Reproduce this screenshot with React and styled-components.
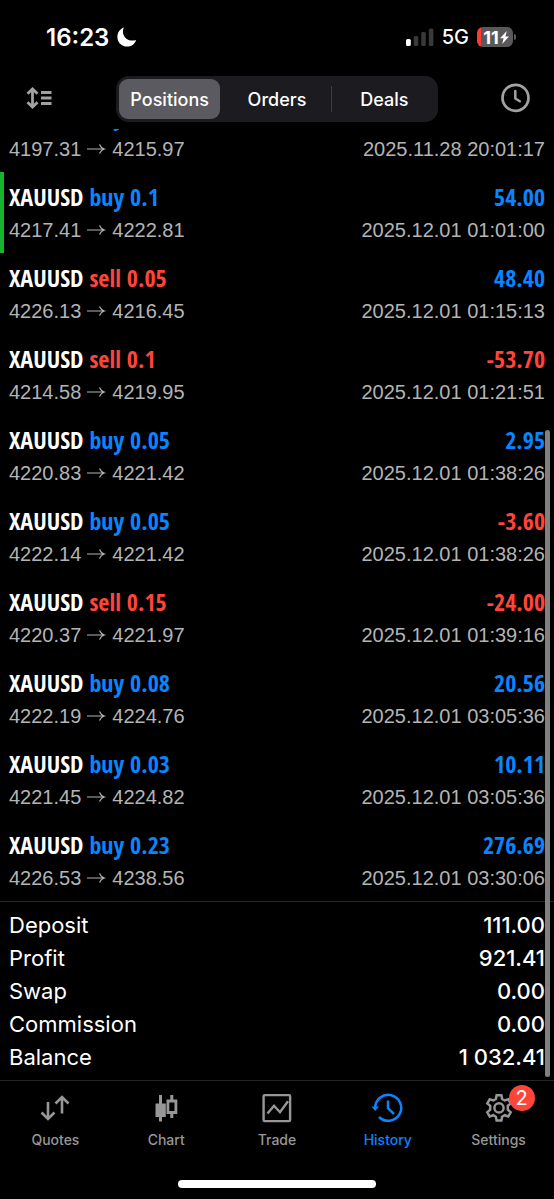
import styled, { createGlobalStyle } from "styled-components";

const positions = [
  { side: "buy", volume: "0.05", open: "4197.31", close: "4215.97", profit: "93.30", time: "2025.11.28 20:01:17" },
  { side: "buy", volume: "0.1", open: "4217.41", close: "4222.81", profit: "54.00", time: "2025.12.01 01:01:00", marked: true },
  { side: "sell", volume: "0.05", open: "4226.13", close: "4216.45", profit: "48.40", time: "2025.12.01 01:15:13" },
  { side: "sell", volume: "0.1", open: "4214.58", close: "4219.95", profit: "-53.70", time: "2025.12.01 01:21:51" },
  { side: "buy", volume: "0.05", open: "4220.83", close: "4221.42", profit: "2.95", time: "2025.12.01 01:38:26" },
  { side: "buy", volume: "0.05", open: "4222.14", close: "4221.42", profit: "-3.60", time: "2025.12.01 01:38:26" },
  { side: "sell", volume: "0.15", open: "4220.37", close: "4221.97", profit: "-24.00", time: "2025.12.01 01:39:16" },
  { side: "buy", volume: "0.08", open: "4222.19", close: "4224.76", profit: "20.56", time: "2025.12.01 03:05:36" },
  { side: "buy", volume: "0.03", open: "4221.45", close: "4224.82", profit: "10.11", time: "2025.12.01 03:05:36" },
  { side: "buy", volume: "0.23", open: "4226.53", close: "4238.56", profit: "276.69", time: "2025.12.01 03:30:06" },
];

const totals = [
  ["Deposit", "111.00"],
  ["Profit", "921.41"],
  ["Swap", "0.00"],
  ["Commission", "0.00"],
  ["Balance", "1 032.41"],
];

const views = ["Positions", "Orders", "Deals"];

const MoonIcon = () => (
  <svg width="20" height="20" viewBox="0 0 20 20" fill="#fff" aria-hidden="true">
    <path d="M6.800 0.600C5 5 6.200 9.500 9.800 12c2.700 1.800 6.200 2.100 9.400 0.900C17.800 17 14.200 19.600 10 19.600 4.600 19.600 0.400 15.400 0.400 10 0.400 5.600 3 1.900 6.800 0.600z" />
  </svg>
);

const SignalIcon = () => (
  <svg width="28" height="20" viewBox="0 0 28 20" aria-hidden="true">
    <rect x="0" y="12" width="4.800" height="7" rx="1.500" fill="#fff" />
    <rect x="7.700" y="9" width="4.600" height="10" rx="1.500" fill="#39393a" />
    <rect x="15.200" y="5" width="4.600" height="14" rx="1.500" fill="#39393a" />
    <rect x="22.800" y="1.500" width="4.600" height="17.500" rx="1.500" fill="#39393a" />
  </svg>
);

const BoltIcon = () => (
  <svg width="9" height="13" viewBox="0 0 9 13" fill="#fff" aria-hidden="true">
    <path d="M6.800 0L0 7.300h3.600L2.200 13 9 5.500H5.400z" />
  </svg>
);

const SortIcon = () => (
  <svg width="26" height="24" viewBox="0 0 26 24" fill="none" stroke="#a2a2a2" aria-hidden="true">
    <path d="M6.500 2.500v17M1.500 6.800L6.500 2l5 4.800M1.500 15.200l5 4.800 5-4.800" strokeWidth="2.800" />
    <path d="M15 5.500h10.500M15 11h10.500M15 16.500h10.500" strokeWidth="2.800" />
  </svg>
);

const ClockIcon = () => (
  <svg width="30" height="30" viewBox="0 0 30 30" fill="none" stroke="#a2a2a2" aria-hidden="true">
    <circle cx="15.500" cy="13.800" r="13" strokeWidth="2.700" />
    <path d="M15.300 7v7.500l4.500 2.800" strokeWidth="2.500" strokeLinecap="round" strokeLinejoin="round" />
  </svg>
);

const ArrowIcon = () => (
  <Arrow width="18" height="12" viewBox="0 0 18 12" fill="none" stroke="currentColor" role="img" aria-label="to">
    <path d="M0 6h17M12.500 1.500Q14 5 17.200 6 14 7 12.500 10.500" strokeWidth="1.200" />
  </Arrow>
);

const QuotesIcon = () => (
  <svg width="30" height="30" viewBox="0 0 30 30" fill="none" stroke="currentColor" strokeWidth="2.600" aria-hidden="true">
    <path d="M8 9v17M1.500 19.500L8 26l6.500-6.500" />
    <path d="M22 20.500V4M15.500 10.500L22 4l6.500 6.500" />
  </svg>
);

const ChartIcon = () => (
  <svg width="30" height="30" viewBox="0 0 30 30" aria-hidden="true">
    <path d="M8 2h3v8.500h3.800v13.500H11v4.500H8v-4.500H4.500V10.500H8z" fill="currentColor" />
    <path d="M19.300 2h3V6.500h4v14.500h-4V25h-3v-4h-3.800V6.500h3.800zM18.300 9.500v8.500h5.200v-8.500z" fill="currentColor" fillRule="evenodd" />
  </svg>
);

const TradeIcon = () => (
  <svg width="30" height="30" viewBox="0 0 30 30" fill="none" stroke="currentColor" strokeWidth="2.400" aria-hidden="true">
    <rect x="1.600" y="2.100" width="26.500" height="26" rx="1.200" />
    <path d="M5.500 20.500l6.500-7.800 6 6.500 8-11" />
  </svg>
);

const HistoryIcon = () => (
  <svg width="30" height="30" viewBox="0 0 30 30" fill="none" stroke="currentColor" strokeWidth="2.500" aria-hidden="true">
    <path d="M2.200 15.200A13 13 0 1 1 6 24" />
    <path d="M-1.500 13.500h7.400l-3.700 4.500z" fill="currentColor" stroke="none" />
    <path d="M15 7.500v7.800l6 5.700" />
  </svg>
);

const GearIcon = () => (
  <svg width="30" height="30" viewBox="0 0 30 30" fill="none" stroke="currentColor" strokeWidth="2.500" aria-hidden="true">
    <path d="M12.600 2.200h4.800l0.700 3.800 2.600 1.500 3.600-1.300 2.400 4.200-2.900 2.500v3.900l2.900 2.500-2.400 4.200-3.600-1.300-2.600 1.500-0.700 3.800h-4.800l-0.700-3.800-2.600-1.500-3.600 1.300-2.400-4.200 2.900-2.500v-3.900l-2.900-2.500 2.400-4.200 3.600 1.300 2.600-1.500z" />
    <circle cx="15" cy="14.900" r="4.600" />
  </svg>
);

const tabs = [
  { label: "Quotes", Icon: QuotesIcon },
  { label: "Chart", Icon: ChartIcon },
  { label: "Trade", Icon: TradeIcon },
  { label: "History", Icon: HistoryIcon, active: true },
  { label: "Settings", Icon: GearIcon, badge: 2 },
];

const App = () => {
  return (
    <>
      <GlobalStyle />
      <Screen>
        <StatusBar>
          <StatusGroup>
            <Time>16:23</Time>
            <MoonIcon />
          </StatusGroup>
          <StatusGroup>
            <SignalIcon />
            <Network>5G</Network>
            <Battery>
              <BatteryBody>
                11
                <BoltIcon />
              </BatteryBody>
              <BatteryTip />
            </Battery>
          </StatusGroup>
        </StatusBar>

        <Toolbar>
          <IconButton aria-label="Sort">
            <SortIcon />
          </IconButton>
          <Segments>
            {views.map((view, i) => (
              <Segment key={view} $divided={i === 2}>
                <SegmentButton $active={i === 0} aria-pressed={i === 0}>
                  {view}
                </SegmentButton>
              </Segment>
            ))}
          </Segments>
          <IconButton aria-label="Period" $end>
            <ClockIcon />
          </IconButton>
        </Toolbar>

        <Content>
          <PositionList>
            {positions.map((p) => (
              <Position key={p.time + p.volume + p.profit} $marked={p.marked}>
                <Line>
                  <Deal>
                    XAUUSD <Tone $red={p.side === "sell"}>{p.side} {p.volume}</Tone>
                  </Deal>
                  <Deal>
                    <Tone $red={p.profit.startsWith("-")}>{p.profit}</Tone>
                  </Deal>
                </Line>
                <Line>
                  <Detail>
                    {p.open}
                    <ArrowIcon />
                    {p.close}
                  </Detail>
                  <Detail>{p.time}</Detail>
                </Line>
              </Position>
            ))}
          </PositionList>
          <Totals>
            <tbody>
              {totals.map(([name, value]) => (
                <tr key={name}>
                  <TotalName scope="row">{name}</TotalName>
                  <TotalValue>{value}</TotalValue>
                </tr>
              ))}
            </tbody>
          </Totals>
          <ScrollThumb />
        </Content>

        <TabBar>
          {tabs.map(({ label, Icon, active, badge }) => (
            <Tab key={label} href="#" $active={active}>
              <TabIcon>
                <Icon />
                {badge && <Badge>{badge}</Badge>}
              </TabIcon>
              {label}
            </Tab>
          ))}
        </TabBar>
        <HomeArea>
          <HomeIndicator />
        </HomeArea>
      </Screen>
    </>
  );
};

export default App;

const GlobalStyle = createGlobalStyle`
  * {
    box-sizing: border-box;
  }
  body {
    margin: 0;
    background: #000;
    color: #fff;
    font-family: Inter, "Liberation Sans", sans-serif;
  }
  svg {
    display: block;
    overflow: visible;
  }
`;

const Screen = styled.div`
  display: flex;
  flex-direction: column;
  height: 100vh;
  overflow: hidden;
`;

const StatusBar = styled.div`
  display: flex;
  justify-content: space-between;
  align-items: center;
  flex-shrink: 0;
  height: 74px;
  padding: 0 38px 0 46px;
`;

const StatusGroup = styled.div`
  display: flex;
  align-items: center;
  gap: 8px;
`;

const Time = styled.span`
  font-size: 24px;
  font-weight: 600;
`;

const Network = styled.span`
  font-size: 20px;
  font-weight: 500;
`;

const Battery = styled.div`
  display: flex;
  align-items: center;
  gap: 1px;
`;

const BatteryBody = styled.div`
  display: flex;
  align-items: center;
  justify-content: center;
  gap: 1px;
  width: 36px;
  height: 20px;
  padding-left: 2px;
  border-radius: 6px;
  background: linear-gradient(to right, #ff3b30 4px, #59595b 4px);
  font-size: 18px;
  font-weight: 700;
`;

const BatteryTip = styled.div`
  width: 2px;
  height: 6px;
  border-radius: 0 2px 2px 0;
  background: #59595b;
`;

const Toolbar = styled.header`
  display: grid;
  grid-template-columns: 1fr minmax(0, 322px) 1fr;
  align-items: center;
  flex-shrink: 0;
  padding: 2px 24px 7px;
`;

const IconButton = styled.button`
  justify-self: ${({ $end }) => ($end ? "end" : "start")};
  padding: 0 ${({ $end }) => ($end ? "0" : "2px")};
  border: none;
  background: none;
`;

const Segments = styled.div`
  display: grid;
  grid-template-columns: repeat(3, 1fr);
  height: 46px;
  border-radius: 13px;
  background: #1c1c20;
`;

const Segment = styled.div`
  display: flex;
  padding: 3px;
  background: ${({ $divided }) =>
    $divided
      ? "linear-gradient(#3c3c41, #3c3c41) left center / 1px 26px no-repeat"
      : "none"};
`;

const SegmentButton = styled.button`
  flex: 1;
  padding: 0;
  border: none;
  border-radius: 9px;
  background: ${({ $active }) => ($active ? "#5b5a60" : "transparent")};
  color: #fff;
  font-family: inherit;
  font-size: 18px;
  font-weight: 500;
`;

const Content = styled.main`
  position: relative;
  display: flex;
  flex-direction: column;
  justify-content: flex-end;
  flex: 1;
  min-height: 0;
  overflow: hidden;
`;

const PositionList = styled.ul`
  margin: 0;
  padding: 0;
  list-style: none;
`;

const Position = styled.li`
  height: 81px;
  padding: 7px 9px 0 5px;
  border-left: 4px solid ${({ $marked }) => ($marked ? "#16b52e" : "transparent")};
`;

const Line = styled.div`
  display: flex;
  justify-content: space-between;
  align-items: center;
  height: 34px;
`;

const Deal = styled.span`
  font-family: "Open Sans Condensed", "Roboto Condensed", "Noto Sans Condensed",
    "Liberation Sans Narrow", sans-serif;
  font-size: 24px;
  font-weight: 700;
`;

const Tone = styled.span`
  color: ${({ $red }) => ($red ? "#ff453a" : "#0a84ff")};
`;

const Detail = styled.span`
  color: #b4b4b4;
  font-family: "Liberation Sans", Arial, sans-serif;
  font-size: 20px;
`;

const Arrow = styled.svg`
  display: inline-block;
  margin: 0 7px 1px 6px;
`;

const Totals = styled.table`
  width: 100%;
  padding: 6px 9px 7px;
  border-top: 1px solid #252527;
  border-spacing: 0;
`;

const TotalName = styled.th`
  height: 33px;
  padding: 0;
  font-size: 22px;
  font-weight: 400;
  text-align: left;
`;

const TotalValue = styled.td`
  padding: 0;
  font-size: 22px;
  font-weight: 500;
  text-align: right;
`;

const ScrollThumb = styled.div`
  position: absolute;
  right: 4px;
  bottom: 3px;
  width: 5px;
  height: 68%;
  border-radius: 3px;
  background: #808080;
`;

const TabBar = styled.nav`
  display: grid;
  grid-template-columns: repeat(5, 1fr);
  flex-shrink: 0;
  padding-top: 12px;
  border-top: 1px solid #252527;
`;

const Tab = styled.a`
  display: flex;
  flex-direction: column;
  align-items: center;
  gap: 8px;
  color: ${({ $active }) => ($active ? "#0a84ff" : "#979797")};
  font-size: 14px;
  font-weight: 500;
  line-height: 18px;
  text-decoration: none;
`;

const TabIcon = styled.span`
  position: relative;
`;

const Badge = styled.span`
  position: absolute;
  top: -8px;
  right: -21px;
  width: 26px;
  height: 26px;
  border-radius: 50%;
  background: #ff453a;
  color: #fff;
  font-size: 20px;
  font-weight: 400;
  line-height: 26px;
  text-align: center;
`;

const HomeArea = styled.div`
  display: flex;
  justify-content: center;
  flex-shrink: 0;
  padding: 31px 0 11px;
`;

const HomeIndicator = styled.div`
  width: 198px;
  height: 8px;
  border-radius: 4px;
  background: #fff;
`;
